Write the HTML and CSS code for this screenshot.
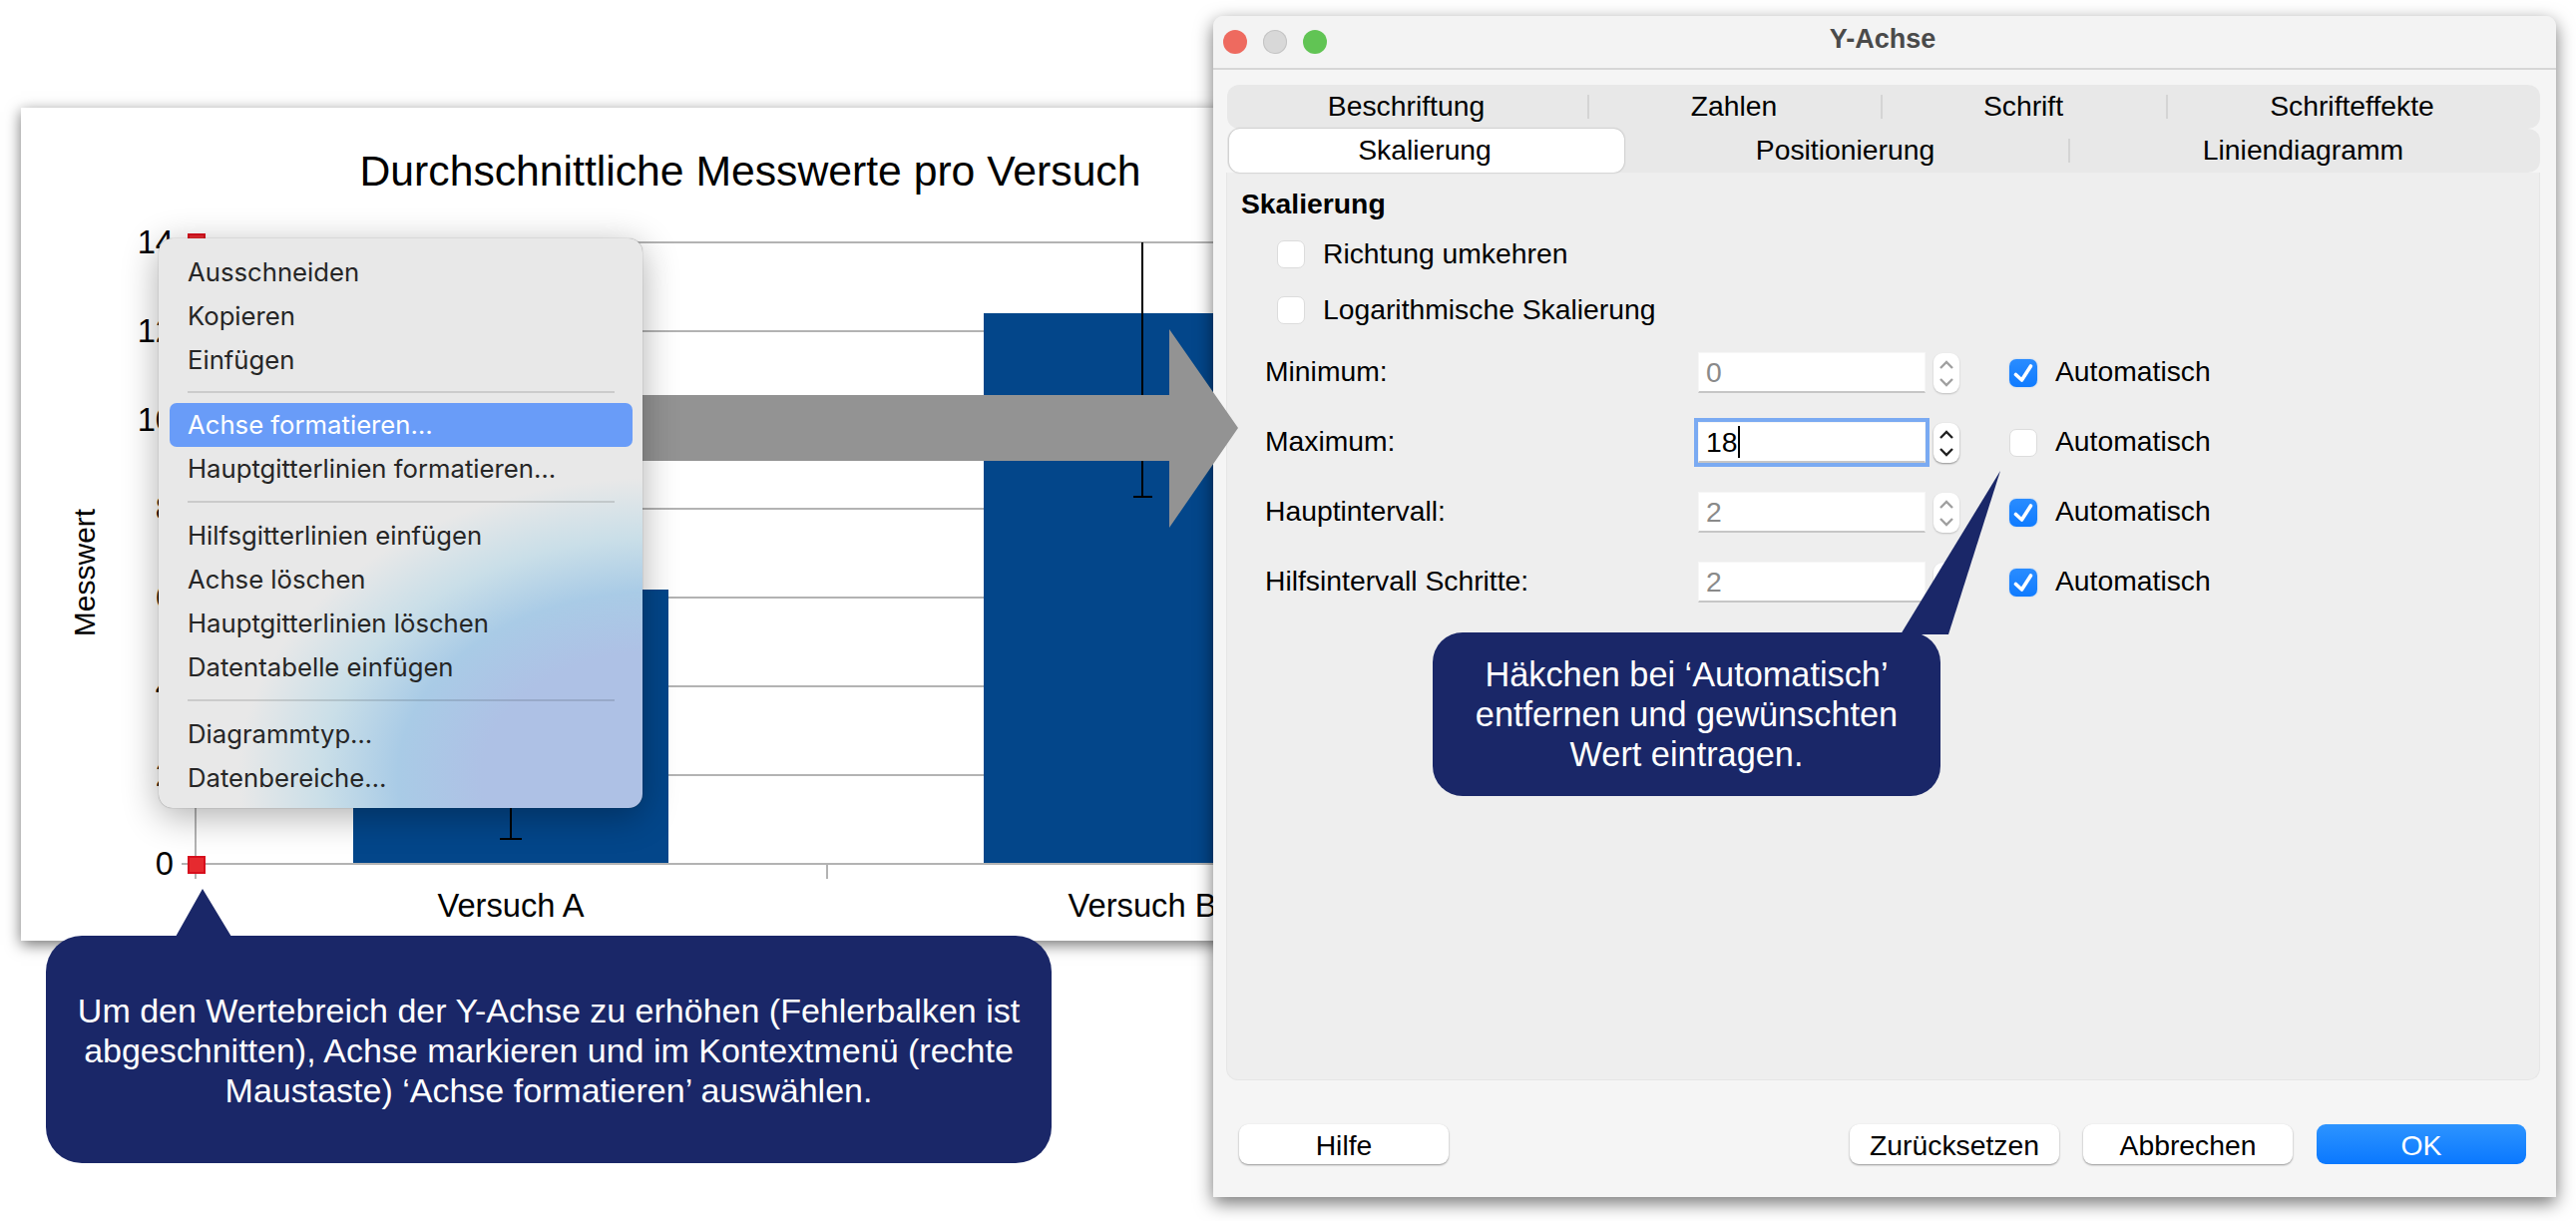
FILE: index.html
```html
<!DOCTYPE html>
<html lang="de">
<head>
<meta charset="UTF-8">
<title>Y-Achse formatieren</title>
<link rel="stylesheet" href="styles.css">
</head>
<body>
<div class="stage">

    <!-- chart, drawn in page coordinates -->
    <svg class="chart" viewBox="21 108 1240 835">
        <rect x="21" y="108" width="1240" height="835" fill="#fff"/>
        <text class="chart-title" x="752" y="186" text-anchor="middle">Durchschnittliche Messwerte pro Versuch</text>
        <g class="grid">
            <line x1="182" y1="243" x2="1261" y2="243"/>
            <line x1="182" y1="332" x2="1261" y2="332"/>
            <line x1="182" y1="421" x2="1261" y2="421"/>
            <line x1="182" y1="510" x2="1261" y2="510"/>
            <line x1="182" y1="599" x2="1261" y2="599"/>
            <line x1="182" y1="688" x2="1261" y2="688"/>
            <line x1="182" y1="777" x2="1261" y2="777"/>
            <line x1="182" y1="866" x2="1261" y2="866"/>
            <line x1="196" y1="243" x2="196" y2="881"/>
            <line x1="829" y1="866" x2="829" y2="881"/>
        </g>
        <rect class="bar" x="354" y="591" width="316" height="274"/>
        <rect class="bar" x="986" y="314" width="275" height="551"/>
        <g class="whisker">
            <line x1="512" y1="591" x2="512" y2="841"/>
            <line x1="501" y1="841" x2="523" y2="841"/>
            <line x1="1145" y1="243" x2="1145" y2="498"/>
            <line x1="1136" y1="498" x2="1155" y2="498"/>
        </g>
        <rect class="handle" x="189" y="235" width="16" height="16"/>
        <rect class="handle" x="189" y="859" width="16" height="16"/>
        <g class="tick-label">
            <text x="174" y="254" text-anchor="end">14</text>
            <text x="174" y="343" text-anchor="end">12</text>
            <text x="174" y="432" text-anchor="end">10</text>
            <text x="174" y="521" text-anchor="end">8</text>
            <text x="174" y="610" text-anchor="end">6</text>
            <text x="174" y="699" text-anchor="end">4</text>
            <text x="174" y="788" text-anchor="end">2</text>
            <text x="174" y="877" text-anchor="end">0</text>
            <text x="512" y="919" text-anchor="middle">Versuch A</text>
            <text x="1145" y="919" text-anchor="middle">Versuch B</text>
        </g>
        <text class="axis-title" transform="translate(95 574) rotate(-90)" text-anchor="middle">Messwert</text>
    </svg>

    <!-- dialog -->
    <div class="dialog">
        <div class="titlebar">
            <span class="light light-red"></span>
            <span class="light light-gray"></span>
            <span class="light light-green"></span>
            <span class="dialog-title">Y-Achse</span>
        </div>

        <div class="tabs">
            <div class="tab-row">
                <div class="tab tab-1a">Beschriftung</div>
                <div class="tab tab-1b">Zahlen</div>
                <div class="tab tab-1c">Schrift</div>
                <div class="tab tab-1d">Schrifteffekte</div>
            </div>
            <div class="tab-row">
                <div class="tab tab-active">Skalierung</div>
                <div class="tab tab-2b">Positionierung</div>
                <div class="tab tab-2c">Liniendiagramm</div>
            </div>
        </div>

        <div class="panel">
            <div class="panel-heading">Skalierung</div>
            <div class="check-row">
                <span class="check"></span>
                <span class="check-text">Richtung umkehren</span>
            </div>
            <div class="check-row">
                <span class="check"></span>
                <span class="check-text">Logarithmische Skalierung</span>
            </div>

            <div class="form-rows">
                <div class="form-row">
                    <span class="form-label">Minimum:</span>
                    <div class="field field-off">0</div>
                    <div class="stepper stepper-off">
                        <svg viewBox="0 0 26 40"><path d="M7 15l6-6 6 6M7 26l6 6 6-6"/></svg>
                    </div>
                    <span class="check check-on"><svg viewBox="0 0 28 28"><path d="M6.5 15.5l6 5.5L21.5 7"/></svg></span>
                    <span class="auto-label">Automatisch</span>
                </div>
                <div class="form-row">
                    <span class="form-label">Maximum:</span>
                    <div class="field field-focus"><span class="caret">18</span></div>
                    <div class="stepper">
                        <svg viewBox="0 0 26 40"><path d="M7 15l6-6 6 6M7 26l6 6 6-6"/></svg>
                    </div>
                    <span class="check"></span>
                    <span class="auto-label">Automatisch</span>
                </div>
                <div class="form-row">
                    <span class="form-label">Hauptintervall:</span>
                    <div class="field field-off">2</div>
                    <div class="stepper stepper-off">
                        <svg viewBox="0 0 26 40"><path d="M7 15l6-6 6 6M7 26l6 6 6-6"/></svg>
                    </div>
                    <span class="check check-on"><svg viewBox="0 0 28 28"><path d="M6.5 15.5l6 5.5L21.5 7"/></svg></span>
                    <span class="auto-label">Automatisch</span>
                </div>
                <div class="form-row">
                    <span class="form-label">Hilfsintervall Schritte:</span>
                    <div class="field field-off">2</div>
                    <div class="stepper stepper-off">
                        <svg viewBox="0 0 26 40"><path d="M7 15l6-6 6 6M7 26l6 6 6-6"/></svg>
                    </div>
                    <span class="check check-on"><svg viewBox="0 0 28 28"><path d="M6.5 15.5l6 5.5L21.5 7"/></svg></span>
                    <span class="auto-label">Automatisch</span>
                </div>
            </div>
        </div>

        <div class="footer">
            <button class="btn">Hilfe</button>
            <div class="footer-right">
                <button class="btn">Zurücksetzen</button>
                <button class="btn">Abbrechen</button>
                <button class="btn btn-ok">OK</button>
            </div>
        </div>
    </div>

    <svg class="arrow" viewBox="0 0 641 199">
        <polygon points="0,66 572,66 572,0 641,99 572,199 572,132 0,132"/>
    </svg>

    <!-- context menu -->
    <div class="menu">
        <div class="menu-item">Ausschneiden</div>
        <div class="menu-item">Kopieren</div>
        <div class="menu-item">Einfügen</div>
        <div class="menu-sep menu-sep-tight"></div>
        <div class="menu-item menu-item-on">Achse formatieren…</div>
        <div class="menu-item">Hauptgitterlinien formatieren…</div>
        <div class="menu-sep"></div>
        <div class="menu-item">Hilfsgitterlinien einfügen</div>
        <div class="menu-item">Achse löschen</div>
        <div class="menu-item">Hauptgitterlinien löschen</div>
        <div class="menu-item">Datentabelle einfügen</div>
        <div class="menu-sep"></div>
        <div class="menu-item">Diagrammtyp…</div>
        <div class="menu-item">Datenbereiche…</div>
    </div>

    <!-- callouts -->
    <div class="callout callout-left">
        <svg class="tail tail-left" viewBox="0 0 56 48"><polygon points="27,0 56,48 0,48"/></svg>
        Um den Wertebreich der Y-Achse zu erhöhen (Fehlerbalken ist<br>
        abgeschnitten), Achse markieren und im Kontextmenü (rechte<br>
        Maustaste) ‘Achse formatieren’ auswählen.
    </div>
    <div class="callout callout-right">
        <svg class="tail tail-right" viewBox="0 0 100 164"><polygon points="100,0 48,164 0,164"/></svg>
        Häkchen bei ‘Automatisch’<br>
        entfernen und gewünschten<br>
        Wert eintragen.
    </div>
</div>
</body>
</html>
```

FILE: styles.css
```css
body {
    margin: 0;
    background-color: #fff;
    font-family: "Liberation Sans", Arial, sans-serif;
    color: #000;
}

.stage {
    position: relative;
    width: 2582px;
    height: 1224px;
    overflow: hidden;
}

/* chart */
.chart {
    position: absolute;
    left: 21px;
    top: 108px;
    width: 1240px;
    height: 835px;
    box-shadow: 0 4px 14px rgba(0, 0, 0, 0.55);
}
.chart-title {
    font-size: 42.7px;
}
.grid line {
    stroke: #b3b3b3;
    stroke-width: 2;
}
.bar {
    fill: #03468a;
}
.whisker line {
    stroke: #000;
    stroke-width: 2;
}
.handle {
    fill: #e62a2f;
    stroke: #d70f1d;
    stroke-width: 2;
}
.tick-label text {
    font-size: 32.7px;
}
.axis-title {
    font-size: 30px;
}

/* dialog */
.dialog {
    position: absolute;
    left: 1216px;
    top: 16px;
    width: 1346px;
    height: 1184px;
    display: flex;
    flex-direction: column;
    background-color: #f5f5f5;
    border-radius: 10px 10px 0 0;
    box-shadow: 0 6px 18px rgba(0, 0, 0, 0.55);
}
.titlebar {
    display: flex;
    align-items: center;
    gap: 16px;
    height: 52px;
    padding-left: 10px;
    position: relative;
    background-color: #f3f3f3;
    border-bottom: 2px solid #d6d6d6;
    border-radius: 10px 10px 0 0;
}
.light {
    width: 24px;
    height: 24px;
    border-radius: 50%;
}
.light-red {
    background-color: #ee6a5f;
}
.light-gray {
    background-color: #d8d8d8;
    box-shadow: inset 0 0 0 1px #c4c4c4;
}
.light-green {
    background-color: #61c454;
}
.dialog-title {
    position: absolute;
    left: 0;
    right: 4px;
    top: 8px;
    text-align: center;
    font-size: 27px;
    font-weight: bold;
    color: #4a4a4a;
}

.tabs {
    margin: 15px 16px 0 14px;
}
.tab-row {
    display: flex;
    height: 44px;
    background-color: #e8e8e8;
    border-radius: 12px;
    font-size: 28.3px;
}
.tab {
    display: flex;
    align-items: center;
    justify-content: center;
    position: relative;
    box-sizing: border-box;
    padding: 0 4px 2px 0;
}
.tab-1a { width: 363px; }
.tab-1b { width: 294px; }
.tab-1c { width: 286px; }
.tab-1d { width: 373px; }
.tab-2b { width: 447px; }
.tab-2c { width: 471px; }
.tab-1a::after, .tab-1b::after, .tab-1c::after, .tab-2b::after {
    content: "";
    position: absolute;
    right: 0;
    top: 10px;
    width: 2px;
    height: 24px;
    background-color: #d4d4d4;
}
.tab-active {
    width: 396px;
    margin-left: 2px;
    background-color: #fff;
    border-radius: 11px;
    box-shadow: 0 0 2px rgba(0, 0, 0, 0.35);
}

.panel {
    flex: 1;
    margin: 0 16px 0 13px;
    padding: 15px 15px 0 14px;
    background-color: #eeeeee;
    border: 1px solid #e6e6e6;
    border-top: none;
    border-radius: 0 0 12px 12px;
    font-size: 28.3px;
}
.panel-heading {
    font-weight: bold;
    height: 32px;
    line-height: 32px;
}
.check-row {
    display: flex;
    align-items: center;
    gap: 18px;
    height: 28px;
    margin: 21px 0 0 36px;
}
.check-row + .check-row {
    margin-top: 28px;
}
.check-text {
    margin-top: -2px;
}
.check {
    display: block;
    flex: none;
    width: 28px;
    height: 28px;
    box-sizing: border-box;
    background-color: #fff;
    border: 1px solid #dcdcdc;
    border-radius: 7px;
}
.check-on {
    background: linear-gradient(#2a8cff, #0f7bff);
    border: none;
    box-shadow: 0 0 2px rgba(0, 120, 255, 0.3);
}
.check-on svg {
    display: block;
}
.check-on path {
    fill: none;
    stroke: #fff;
    stroke-width: 3.6;
    stroke-linecap: round;
    stroke-linejoin: round;
}

.form-rows {
    margin: 28px 0 0 24px;
}
.form-row {
    display: flex;
    align-items: center;
    height: 41px;
    margin-bottom: 29px;
}
.form-label {
    width: 433px;
    margin-top: -2px;
}
.field {
    width: 228px;
    height: 41px;
    box-sizing: border-box;
    margin-left: 1px;
    padding-left: 7px;
    line-height: 38px;
    background-color: #fff;
    border: 1px solid #f6f6f6;
    border-bottom: 2px solid #c6c6c6;
}
.field-off {
    color: #8a8a8a;
}
.field-focus {
    box-shadow: 0 0 0 4px #7aaaf2;
}
.caret {
    border-right: 2px solid #000;
    padding-right: 1px;
}
.stepper {
    width: 26px;
    height: 40px;
    margin-left: 8px;
    background-color: #fff;
    border-radius: 9px;
    box-shadow: 0 1px 2px rgba(0, 0, 0, 0.4);
}
.stepper svg {
    display: block;
}
.stepper path {
    fill: none;
    stroke: #222;
    stroke-width: 2.4;
}
.stepper-off {
    box-shadow: 0 1px 2px rgba(0, 0, 0, 0.2);
}
.stepper-off path {
    stroke: #a0a0a0;
}
.form-row .check {
    margin-left: 50px;
}
.auto-label {
    margin: -2px 0 0 18px;
}

.footer {
    display: flex;
    justify-content: space-between;
    align-items: flex-start;
    height: 117px;
    padding: 44px 30px 0 26px;
    box-sizing: border-box;
}
.footer-right {
    display: flex;
    gap: 24px;
}
.btn {
    width: 210px;
    height: 40px;
    padding: 2px 0 0;
    background-color: #fff;
    border: none;
    border-radius: 9px;
    box-shadow: 0 1px 2px rgba(0, 0, 0, 0.4);
    font-family: inherit;
    font-size: 28.3px;
    color: #000;
}
.btn-ok {
    background: linear-gradient(#2d94ff, #0a78ff);
    color: #fff;
    box-shadow: none;
}

/* arrow between menu and dialog */
.arrow {
    position: absolute;
    left: 600px;
    top: 330px;
    width: 641px;
    height: 199px;
}
.arrow polygon {
    fill: #939393;
}

/* context menu */
.menu {
    position: absolute;
    left: 159px;
    top: 239px;
    width: 485px;
    height: 571px;
    box-sizing: border-box;
    padding-top: 12px;
    background:
        radial-gradient(ellipse 420px 300px at 500px 540px, #aec1e5 0, #aec1e5 42%, #a9cbe6 62%, rgba(200, 222, 232, 0.95) 80%, rgba(232, 232, 232, 0) 100%),
        #e8e8e8;
    border-radius: 14px;
    box-shadow: 0 8px 36px rgba(0, 0, 0, 0.32), 0 0 1px rgba(0, 0, 0, 0.5);
    font-family: Inter, "Liberation Sans", sans-serif;
    font-size: 25.7px;
    color: #262626;
}
.menu-item {
    height: 44px;
    line-height: 44px;
    padding-left: 29px;
}
.menu-item-on {
    margin: 0 10px 0 11px;
    padding-left: 18px;
    background-color: #699cf8;
    border-radius: 7px;
    color: #fff;
}
.menu-sep {
    height: 2px;
    margin: 10px 28px 11px 29px;
    background-color: rgba(0, 0, 0, 0.12);
}
.menu-sep-tight {
    margin-top: 9px;
    margin-bottom: 10px;
}

/* callouts */
.callout {
    position: absolute;
    box-sizing: border-box;
    background-color: #1a2768;
    color: #fff;
    text-align: center;
    font-size: 34px;
    line-height: 40px;
}
.callout-left {
    left: 46px;
    top: 938px;
    width: 1008px;
    height: 228px;
    padding-top: 55px;
    border-radius: 36px;
}
.callout-right {
    left: 1436px;
    top: 634px;
    width: 509px;
    height: 164px;
    padding-top: 22px;
    border-radius: 30px;
    font-size: 34.3px;
}
.tail {
    position: absolute;
}
.tail polygon {
    fill: #1a2768;
}
.tail-left {
    left: 130px;
    top: -47px;
    width: 56px;
    height: 48px;
}
.tail-right {
    left: 469px;
    top: -162px;
    width: 100px;
    height: 164px;
}
```
